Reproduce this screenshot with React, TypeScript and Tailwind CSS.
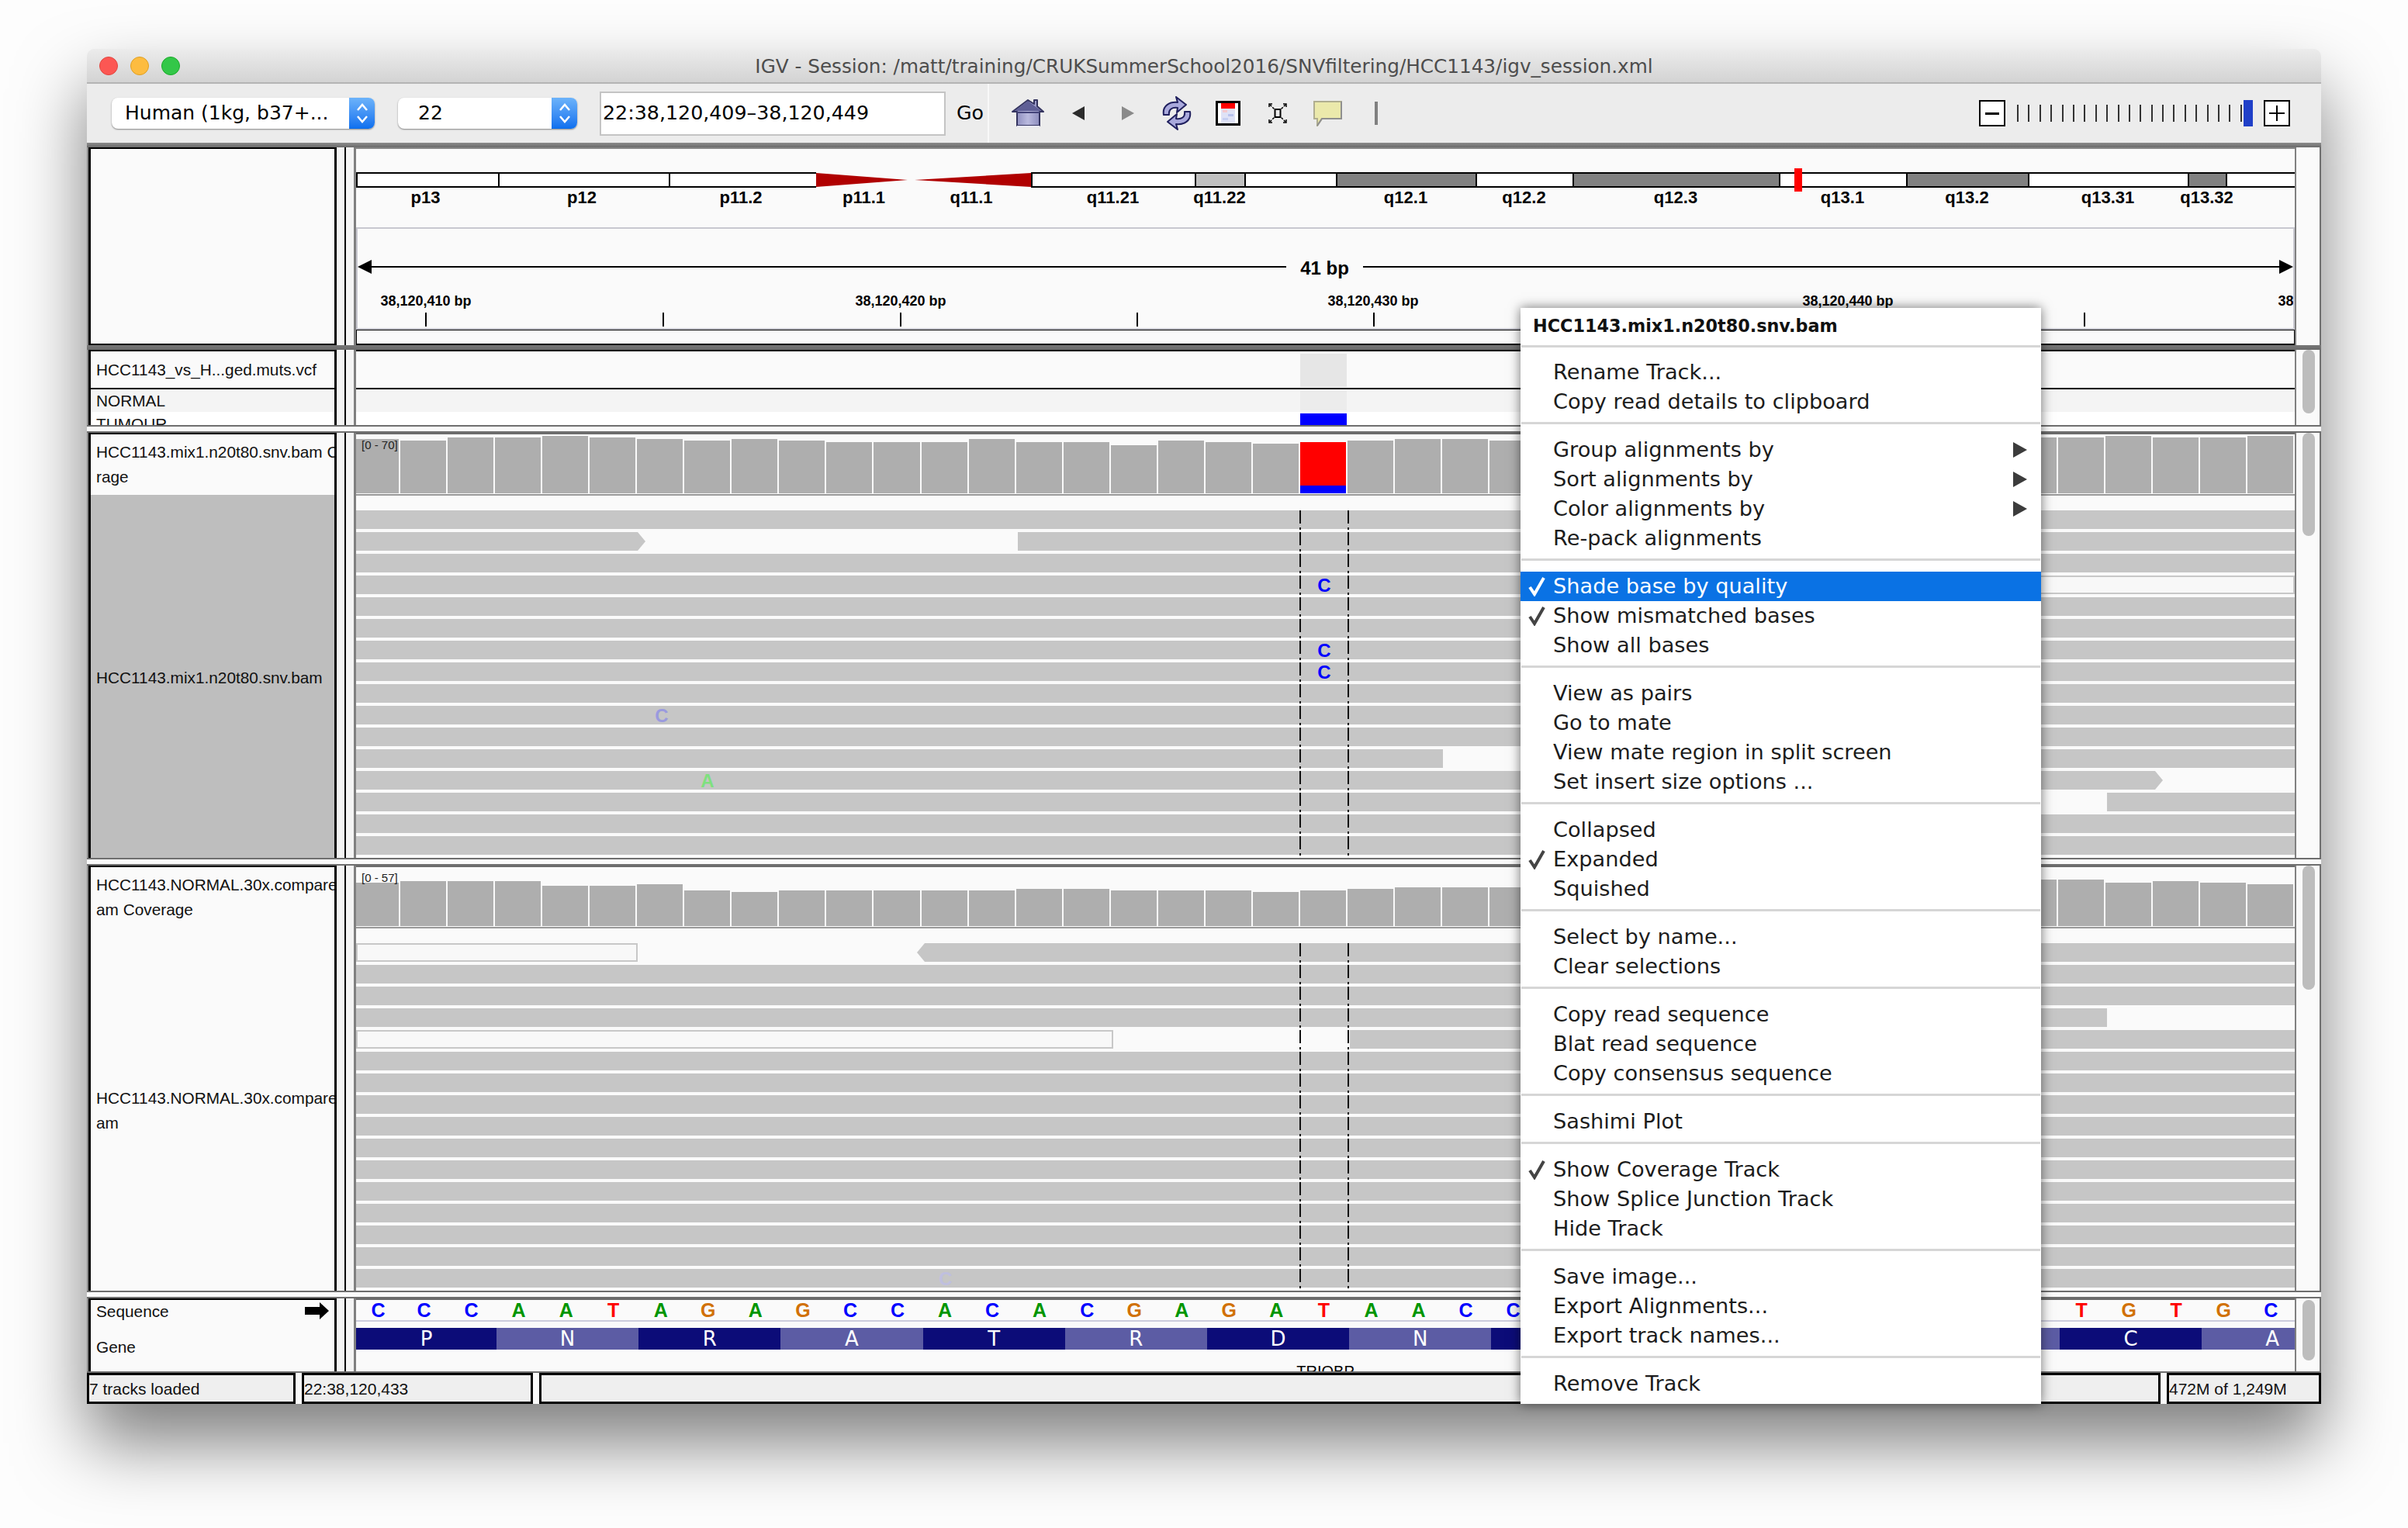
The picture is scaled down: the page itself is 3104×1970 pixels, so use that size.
import React from "react";

const sans = "[font-family:'Liberation_Sans',Arial,sans-serif]";
const lucida = "[font-family:'DejaVu_Sans',sans-serif]";

const bamTops = [566,568,564,564,562,564,566,568,566,568,570,570,570,566,570,570,574,568,570,572,570,568,566,566,568,566,566,564,564,566,564,566,564,564,566,564,564,562,564,564,562];
const normTops = [1138,1136,1136,1136,1142,1142,1140,1148,1150,1148,1148,1148,1148,1148,1146,1146,1148,1148,1148,1150,1148,1146,1144,1144,1144,1142,1140,1138,1136,1138,1138,1136,1136,1138,1136,1134,1134,1138,1136,1138,1140];
const bases = "CCCAATAGAGCCACACGAGATAACC           TGTGC".split("");
const baseColor: Record<string, string> = { A: "text-[#009600]", C: "text-[#0000ff]", G: "text-[#d17105]", T: "text-[#ff0000]" };

type Band = { end: number; label?: string; kind?: "w" | "d" | "l" | "cl" | "cr" };
const bands: Band[] = [
  { end: 642, label: "p13" },
  { end: 862, label: "p12" },
  { end: 1052, label: "p11.2" },
  { end: 1175, label: "p11.1", kind: "cl" },
  { end: 1329, label: "q11.1", kind: "cr" },
  { end: 1540, label: "q11.21" },
  { end: 1604, label: "q11.22", kind: "l" },
  { end: 1722 },
  { end: 1902, label: "q12.1", kind: "d" },
  { end: 2027, label: "q12.2" },
  { end: 2293, label: "q12.3", kind: "d" },
  { end: 2457, label: "q13.1" },
  { end: 2614, label: "q13.2", kind: "d" },
  { end: 2820, label: "q13.31" },
  { end: 2869, label: "q13.32", kind: "d" },
  { end: 2958 },
];

function Cytoband() {
  let start = 459;
  return (
    <div className="relative flex">
      {bands.map((b, i) => {
        const w = b.end - start;
        start = b.end;
        return (
          <div key={i} className="flex shrink-0 flex-col" style={{ width: w }}>
            {b.kind === "cl" ? (
              <svg className="block h-[20px] w-full" viewBox="0 0 123 20" preserveAspectRatio="none">
                <polygon points="0,1 118,10 0,19" fill="#b00000" />
              </svg>
            ) : b.kind === "cr" ? (
              <svg className="block h-[20px] w-full" viewBox="0 0 154 20" preserveAspectRatio="none">
                <polygon points="4,10 154,1 154,19" fill="#b00000" />
              </svg>
            ) : (
              <div
                className={`h-[20px] border-y-2 border-l-2 border-black ${
                  b.kind === "d" ? "bg-[#808080]" : b.kind === "l" ? "bg-[#c0c0c0]" : "bg-white"
                }`}
              />
            )}
            <div className={`flex h-[24px] items-center justify-center whitespace-nowrap text-[22px] font-bold text-black ${sans} ${i < 3 ? "pr-[4px]" : ""}`}>
              {b.label}
            </div>
          </div>
        );
      })}
      <div className="absolute left-[1854px] top-[-5px] h-[30px] w-[10px] bg-[#ff0000]" />
    </div>
  );
}

const tickXs = [548, 854, 1160, 1465, 1770, 2686];
const tickLabels = [
  { x: 549, t: "38,120,410 bp" },
  { x: 1161, t: "38,120,420 bp" },
  { x: 1770, t: "38,120,430 bp" },
  { x: 2382, t: "38,120,440 bp" },
  { x: 2995, t: "38,120,450 bp" },
];

function Ruler() {
  return (
    <div className="relative h-[132px] overflow-hidden border-2 border-[#c8c8d0]">
      <div className="mt-[37px] flex h-[24px] items-center">
        <svg width="18" height="18" viewBox="0 0 18 18" className="shrink-0"><polygon points="0,9 18,0 18,18" fill="#000" /></svg>
        <div className="h-[2px] w-[1179px] bg-black" />
        <div className={`flex w-[99px] justify-center pt-[3px] text-[24px] font-bold leading-none text-black ${sans}`}>41 bp</div>
        <div className="h-[2px] flex-1 bg-black" />
        <svg width="18" height="18" viewBox="0 0 18 18" className="shrink-0"><polygon points="18,9 0,0 0,18" fill="#000" /></svg>
      </div>
      {tickLabels.map((l) => (
        <div
          key={l.x}
          className={`absolute top-[82px] -translate-x-1/2 whitespace-nowrap text-[18px] font-bold leading-[22px] text-black ${sans}`}
          style={{ left: l.x - 461 }}
        >
          {l.t}
        </div>
      ))}
      {tickXs.map((x) => (
        <div key={x} className="absolute top-[108px] h-[18px] w-[2px] bg-black" style={{ left: x - 461 }} />
      ))}
    </div>
  );
}

function Gutter() {
  return (
    <div className="flex w-[25px] shrink-0 bg-[#f4f4f4]">
      <div className="w-[10px]" />
      <div className="w-[2px] bg-black" />
      <div className="w-[10px]" />
      <div className="w-[3px] bg-[#808080]" />
    </div>
  );
}

function ScrollCol({ thumb, top = 0 }: { thumb?: number; top?: number }) {
  return (
    <div className="w-[34px] shrink-0 border-x-2 border-l-[#808080] border-r-[#6f6f6f] bg-[#fafafa] px-[8px]">
      {thumb ? <div className="w-[16px] rounded-[8px] bg-[#bdbdbd]" style={{ height: thumb, marginTop: top }} /> : null}
    </div>
  );
}

function Divider() {
  return <div className="h-[10px] border-y-2 border-[#6e6e6e] bg-[#fafafa]" />;
}

function Coverage({ tops, base, highlight }: { tops: number[]; base: number; highlight?: boolean }) {
  return (
    <div className="flex h-[76px] items-stretch border-b-0">
      {tops.map((t, i) => (
        <div key={i} className={`flex flex-col justify-end pr-[2px] ${i === 0 ? "w-[57px] shrink-0" : "flex-1"}`}>
          {highlight && i === 20 ? (
            <div className="flex flex-col" style={{ height: base - t }}>
              <div className="flex-1 bg-[#ff0000]" />
              <div className="h-[10px] bg-[#0000ff]" />
            </div>
          ) : (
            <div className="bg-[#aeaeae]" style={{ height: base - t }} />
          )}
        </div>
      ))}
    </div>
  );
}

type Seg = [kind: "g" | "w" | "o" | "ar" | "al", end: number];

function ReadRow({ segs }: { segs: Seg[] }) {
  let start = 459;
  return (
    <div className="flex h-[24px]">
      {segs.map(([k, e], i) => {
        const w = e - start;
        start = e;
        if (k === "ar")
          return <div key={i} className="bg-[#c6c6c6] [clip-path:polygon(0_0,100%_50%,0_100%)]" style={{ width: w }} />;
        if (k === "al")
          return <div key={i} className="bg-[#c6c6c6] [clip-path:polygon(100%_0,0_50%,100%_100%)]" style={{ width: w }} />;
        if (k === "o")
          return <div key={i} className="border-2 border-[#c8c8c8] bg-[#f8f8f8]" style={{ width: w }} />;
        return <div key={i} className={k === "g" ? "bg-[#c6c6c6]" : ""} style={{ width: w }} />;
      })}
    </div>
  );
}

const full: Seg[] = [["g", 2958]];
const bamReads: Seg[][] = [
  full,
  [["g", 822], ["ar", 832], ["w", 1312], ["g", 2958]],
  full,
  [["g", 2100], ["o", 2958]],
  full, full, full, full, full, full, full,
  [["g", 1860], ["w", 2300], ["g", 2958]],
  [["g", 2778], ["ar", 2788], ["w", 2958]],
  [["g", 2300], ["w", 2716], ["g", 2958]],
  full, full,
];
const normReads: Seg[][] = [
  [["o", 822], ["w", 1182], ["al", 1192], ["g", 2958]],
  full,
  full,
  [["g", 2716], ["w", 2958]],
  [["o", 1435], ["w", 1740], ["g", 2958]],
  full, full, full, full, full, full, full, full, full, full, full,
];

function Dashes({ h }: { h: number }) {
  const cls =
    "absolute top-0 w-[2px] bg-[repeating-linear-gradient(to_bottom,#111_0,#111_17px,transparent_17px,transparent_22px,#111_22px,#111_25px,transparent_25px,transparent_28px)]";
  return (
    <>
      <div className={`${cls} left-[1216px]`} style={{ height: h }} />
      <div className={`${cls} left-[1278px]`} style={{ height: h }} />
    </>
  );
}

function Mismatch({ x, row, c, cls }: { x: number; row: number; c: string; cls: string }) {
  return (
    <div
      className={`absolute flex h-[26px] w-[22px] -translate-x-1/2 items-center justify-center text-[24px] font-bold ${sans} ${cls}`}
      style={{ left: x - 459, top: row * 28 }}
    >
      {c}
    </div>
  );
}

function Panel({
  tops,
  base,
  reads,
  highlight,
  name,
  nameBg,
  covLabel,
  range,
  thumb,
  letters,
}: {
  tops: number[];
  base: number;
  reads: Seg[][];
  highlight?: boolean;
  name: string[];
  nameBg: string;
  covLabel: string[];
  range: string;
  thumb: number;
  letters: React.ReactNode;
}) {
  return (
    <div className="flex h-[548px]">
      <div className={`flex w-[322px] shrink-0 flex-col border-l-2 border-[#8a8a8a]`}>
        <div className={`flex h-full flex-col overflow-hidden border-x-[3px] border-t-2 border-black bg-[#fafafa] text-[20.8px] leading-[32px] text-[#111] ${sans}`}>
          <div className="h-[78px] shrink-0 whitespace-nowrap pl-[7px] pt-[7px]">
            {covLabel.map((l) => (
              <div key={l}>{l}</div>
            ))}
          </div>
          <div className={`flex flex-1 flex-col justify-center whitespace-nowrap pl-[7px] pt-[3px] ${nameBg}`}>
            {name.map((l) => (
              <div key={l}>{l}</div>
            ))}
          </div>
        </div>
      </div>
      <Gutter />
      <div className="relative w-[2499px] shrink-0 overflow-hidden border-t-2 border-[#6c6c6c] bg-[#fafafa]">
        <Coverage tops={tops} base={base} highlight={highlight} />
        <div className={`mt-[1px] h-[2px] bg-[#999999]`} />
        <div className={`absolute left-[7px] top-[5px] text-[15px] leading-[18px] text-[#222] ${sans}`}>{range}</div>
        <div className="relative mt-[19px] flex flex-col gap-[4px]">
          {reads.map((r, i) => (
            <ReadRow key={i} segs={r} />
          ))}
          <Dashes h={448} />
          {letters}
        </div>
      </div>
      <ScrollCol thumb={thumb} />
    </div>
  );
}

const geneSegs = ["N", "R", "A", "T", "R", "D", "N", "", "", "", "", "C"];

function IconHome() {
  return (
    <svg width="42" height="36" viewBox="0 0 42 36">
      <defs>
        <linearGradient id="hg" x1="0" x2="1" y1="0" y2="0">
          <stop offset="0" stopColor="#7d7db2" />
          <stop offset="0.5" stopColor="#b9b9de" />
          <stop offset="1" stopColor="#7d7db2" />
        </linearGradient>
      </defs>
      <polygon points="21,1 29,6 29,1 33,1 33,9 41,16 36,16 36,34 7,34 7,16 1,16" fill="url(#hg)" stroke="#34345f" strokeWidth="2" strokeLinejoin="round" />
      <polygon points="21,2 38,15 4,15" fill="#5f5f96" />
      <rect x="7" y="16" width="29" height="2" fill="#44447a" />
      <rect x="7" y="34" width="29" height="2" fill="#e8e8f8" />
    </svg>
  );
}

function IconRefresh() {
  return (
    <svg width="42" height="44" viewBox="0 0 42 44">
      <path d="M4 24 C2 12 12 7 22 8 L20 1 L33 11 L21 21 L22 15 C15 14 10 17 11 24 Z" fill="#a9a9dc" stroke="#20205e" strokeWidth="2" strokeLinejoin="round" />
      <path d="M38 20 C40 32 30 37 20 36 L22 43 L9 33 L21 23 L20 29 C27 30 32 27 31 20 Z" fill="#a9a9dc" stroke="#20205e" strokeWidth="2" strokeLinejoin="round" />
    </svg>
  );
}

function IconRegion() {
  return (
    <svg width="32" height="32" viewBox="0 0 32 32">
      <rect x="1.5" y="1.5" width="29" height="29" fill="#fff" stroke="#000" strokeWidth="3" />
      <rect x="7" y="3" width="18" height="7" fill="#ff0000" />
      <rect x="7" y="10" width="18" height="19" fill="#dfe2f6" />
      <rect x="9" y="12" width="6" height="3" fill="#f3c9cf" />
      <rect x="16" y="17" width="7" height="3" fill="#b8c2ee" />
      <rect x="9" y="22" width="7" height="3" fill="#c6cff2" />
    </svg>
  );
}

function IconFit() {
  return (
    <svg width="28" height="28" viewBox="0 0 28 28" fill="none" stroke="#000" strokeWidth="1.5">
      <rect x="10.5" y="9" width="7" height="10" strokeWidth="2" />
      <path d="M4 3 L10 9 M24 3 L18 9 M4 25 L10 19 M24 25 L18 19" strokeDasharray="3 1.5" />
      <path d="M3 6 V2 H7 M25 6 V2 H21 M3 22 V26 H7 M25 22 V26 H21" strokeWidth="1.5" />
    </svg>
  );
}

function IconBubble() {
  return (
    <svg width="38" height="33" viewBox="0 0 38 33">
      <path d="M1 1 H36 V23 H11 L5 32 V23 H1 Z" fill="#ebe9ab" stroke="#b0ae90" strokeWidth="2" />
      <path d="M36 1 V23 H11 L5 32" fill="none" stroke="#8f8f8f" strokeWidth="2" />
    </svg>
  );
}

function Chevs() {
  return (
    <svg width="18" height="30" viewBox="0 0 18 30" fill="none" stroke="#fff" strokeWidth="2.5">
      <path d="M3 11 L9 4 L15 11" />
      <path d="M3 19 L9 26 L15 19" />
    </svg>
  );
}

function Combo({ text, w, pl }: { text: string; w: string; pl: string }) {
  return (
    <div className={`flex h-[40px] shrink-0 overflow-hidden rounded-[8px] bg-white shadow-[0_1px_2px_rgba(0,0,0,0.45)] ${w}`}>
      <div className={`flex flex-1 items-center whitespace-nowrap text-[25px] text-black ${lucida} ${pl}`}>{text}</div>
      <div className="flex w-[33px] items-center justify-center bg-gradient-to-b from-[#6cb3fa] to-[#0a6fee]">
        <Chevs />
      </div>
    </div>
  );
}

type MenuRow = { t: string; check?: boolean; arrow?: boolean; active?: boolean };
const menu: MenuRow[][] = [
  [{ t: "Rename Track..." }, { t: "Copy read details to clipboard" }],
  [{ t: "Group alignments by", arrow: true }, { t: "Sort alignments by", arrow: true }, { t: "Color alignments by", arrow: true }, { t: "Re-pack alignments" }],
  [{ t: "Shade base by quality", check: true, active: true }, { t: "Show mismatched bases", check: true }, { t: "Show all bases" }],
  [{ t: "View as pairs" }, { t: "Go to mate" }, { t: "View mate region in split screen" }, { t: "Set insert size options ..." }],
  [{ t: "Collapsed" }, { t: "Expanded", check: true }, { t: "Squished" }],
  [{ t: "Select by name..." }, { t: "Clear selections" }],
  [{ t: "Copy read sequence" }, { t: "Blat read sequence" }, { t: "Copy consensus sequence" }],
  [{ t: "Sashimi Plot" }],
  [{ t: "Show Coverage Track", check: true }, { t: "Show Splice Junction Track" }, { t: "Hide Track" }],
  [{ t: "Save image..." }, { t: "Export Alignments..." }, { t: "Export track names..." }],
  [{ t: "Remove Track" }],
];

function Menu() {
  return (
    <div className={`absolute bottom-0 left-[1848px] top-[334px] w-[671px] bg-white text-[27.2px] shadow-[0_0_14px_rgba(0,0,0,0.55)] ${lucida}`}>
      <div className="flex h-[48px] items-center pl-[16px] text-[22.3px] font-bold text-[#111]">HCC1143.mix1.n20t80.snv.bam</div>
      <div className="mx-[1px] h-[3px] bg-[#d6d6d6]" />
      {menu.map((sec, i) => (
        <div key={i}>
          <div className={i === 0 ? "pt-[13px]" : "pt-[14px]"}>
            {sec.map((r) => (
              <div
                key={r.t}
                className={`relative flex h-[38px] items-center whitespace-nowrap pl-[42px] ${r.active ? "bg-[#0a72e4] text-white" : "text-[#1c1c1c]"}`}
              >
                {r.check ? (
                  <svg className="absolute left-[9px]" width="26" height="26" viewBox="0 0 26 26" fill="none" stroke={r.active ? "#fff" : "#444"} strokeWidth="4">
                    <path d="M3 14 L9 23 L21 2" />
                  </svg>
                ) : null}
                {r.t}
                {r.arrow ? (
                  <svg className="absolute left-[635px]" width="18" height="20" viewBox="0 0 18 20">
                    <polygon points="0,0 18,10 0,20" fill="#3c3c3c" />
                  </svg>
                ) : null}
              </div>
            ))}
          </div>
          {i < menu.length - 1 ? <div className="mx-[1px] mt-[7px] h-[3px] bg-[#d6d6d6]" /> : null}
        </div>
      ))}
    </div>
  );
}

export default function App() {
  return (
    <div className="h-[1970px] w-[3104px] overflow-hidden bg-[#fdfdfd] pl-[112px] pt-[63px]">
      <div className="relative flex h-[1747px] w-[2880px] flex-col rounded-t-[10px] bg-[#ececec] shadow-[0_50px_90px_rgba(0,0,0,0.5)]">
        {/* Title bar */}
        <div className="relative flex h-[45px] shrink-0 items-center justify-center rounded-t-[10px] border-b-2 border-[#b4b4b4] bg-gradient-to-b from-[#ececec] to-[#d3d3d3] pt-[3px]">
          <div className="absolute left-[16px] top-[10px] flex gap-[16px]">
            <div className="h-[24px] w-[24px] rounded-full border border-[#e2463f] bg-[#fc5753]" />
            <div className="h-[24px] w-[24px] rounded-full border border-[#dfa023] bg-[#fdbc40]" />
            <div className="h-[24px] w-[24px] rounded-full border border-[#1aab29] bg-[#33c748]" />
          </div>
          <div className={`whitespace-nowrap text-[24.7px] text-[#4d4d4d] ${lucida}`}>
            IGV - Session: /matt/training/CRUKSummerSchool2016/SNVfiltering/HCC1143/igv_session.xml
          </div>
        </div>

        {/* Toolbar */}
        <div className="flex h-[76px] shrink-0 items-center bg-[#ececec] pl-[32px]">
          <Combo text="Human (1kg, b37+..." w="w-[339px]" pl="pl-[17px]" />
          <div className="w-[30px]" />
          <Combo text="22" w="w-[231px]" pl="pl-[26px]" />
          <div className="ml-[29px] flex h-[57px] w-[446px] shrink-0 items-center border-2 border-[#c4c4c4] bg-white pl-[2px] text-[25.3px] text-black">
            <span className={lucida}>22:38,120,409–38,120,449</span>
          </div>
          <div className={`ml-[14px] w-[40px] text-[25.3px] text-black ${lucida}`}>Go</div>
          <div className="h-full w-[2px] bg-[#f8f8f8]" />
          <div className="ml-[29px] flex items-center"><IconHome /></div>
          <svg className="ml-[36px]" width="16" height="18" viewBox="0 0 16 18"><polygon points="16,0 0,9 16,18" fill="#2c2c2c" /></svg>
          <svg className="ml-[48px]" width="16" height="18" viewBox="0 0 16 18"><polygon points="0,0 16,9 0,18" fill="#8a8a8a" /></svg>
          <div className="ml-[34px]"><IconRefresh /></div>
          <div className="ml-[29px]"><IconRegion /></div>
          <div className="ml-[34px]"><IconFit /></div>
          <div className="ml-[32px]"><IconBubble /></div>
          <div className="ml-[41px] h-[30px] w-[4px] bg-[#808080]" />
          <div className="flex-1" />
          <div className="flex h-[34px] w-[34px] items-center justify-center border-2 border-black bg-white text-[26px] leading-none">
            <div className="h-[3px] w-[18px] bg-black" />
          </div>
          <div className="ml-[15px] flex h-[22px] w-[290px] justify-between">
            {Array.from({ length: 21 }).map((_, i) => (
              <div key={i} className="h-full w-[2px] bg-[#333]" />
            ))}
          </div>
          <div className="ml-[2px] h-[34px] w-[12px] bg-[#2040c8]" />
          <div className="relative ml-[14px] mr-[40px] flex h-[34px] w-[34px] items-center justify-center border-2 border-black bg-white">
            <div className="h-[2px] w-[20px] bg-black" />
            <div className="absolute h-[20px] w-[2px] bg-black" />
          </div>
        </div>

        {/* Main */}
        <div className="flex min-h-0 flex-1 flex-col">
          <div className="h-[6px] shrink-0 bg-gradient-to-b from-[#8c8c8c] to-[#6c6c6c]" />

          {/* Header row */}
          <div className="flex h-[255px] shrink-0">
            <div className="w-[322px] shrink-0 border-l-2 border-[#8a8a8a]">
              <div className="h-full border-x-[3px] border-y-2 border-black bg-[#fafafa]" />
            </div>
            <Gutter />
            <div className="w-[2499px] shrink-0 bg-[#fafafa]">
              <div className="h-[103px] border-t-2 border-[#888888] pt-[30px]">
                <Cytoband />
              </div>
              <Ruler />
              <div className="h-[20px] border border-b-2 border-black bg-[#fafafa]" />
            </div>
            <ScrollCol />
          </div>

          <div className="h-[6px] shrink-0 bg-gradient-to-b from-[#777777] to-[#6a6a6a]" />

          {/* VCF */}
          <div className="flex h-[97px] shrink-0">
            <div className="w-[322px] shrink-0 border-l-2 border-[#8a8a8a]">
              <div className={`flex h-full flex-col overflow-hidden border-x-[3px] border-t-2 border-black text-[20.8px] text-[#111] ${sans}`}>
                <div className="flex h-[47px] shrink-0 items-center bg-[#fafafa] pl-[7px]">HCC1143_vs_H...ged.muts.vcf</div>
                <div className="h-[2px] shrink-0 bg-black" />
                <div className="flex h-[29px] shrink-0 items-center bg-[#f4f4f4] pl-[7px]">NORMAL</div>
                <div className="h-[30px] bg-white pl-[7px] pt-[4px] leading-[24px]">TUMOUR</div>
              </div>
            </div>
            <Gutter />
            <div className="flex w-[2499px] shrink-0 flex-col overflow-hidden border-t-2 border-black">
              <div className="h-[47px] shrink-0 bg-[#fafafa] pl-[1217px] pt-[3px]">
                <div className="h-[43px] w-[60px] bg-[#e6e6e6]" />
              </div>
              <div className="h-[2px] shrink-0 bg-black" />
              <div className="h-[29px] shrink-0 bg-[#f4f4f4] pl-[1217px] pt-[1px]">
                <div className="h-[26px] w-[60px] bg-[#ececec]" />
              </div>
              <div className="flex-1 bg-white pl-[1217px] pt-[2px]">
                <div className="h-[16px] w-[60px] bg-[#0000ff]" />
              </div>
            </div>
            <ScrollCol thumb={82} />
          </div>

          <Divider />

          {/* BAM */}
          <Panel
            tops={bamTops}
            base={636}
            reads={bamReads}
            highlight
            name={["HCC1143.mix1.n20t80.snv.bam"]}
            nameBg="bg-[#bebebe]"
            covLabel={["HCC1143.mix1.n20t80.snv.bam C", "rage"]}
            range="[0 - 70]"
            thumb={133}
            letters={
              <>
                <Mismatch x={1707} row={3} c="C" cls="text-[#0000ff]" />
                <Mismatch x={1707} row={6} c="C" cls="text-[#0000ff]" />
                <Mismatch x={1707} row={7} c="C" cls="text-[#0000ff]" />
                <Mismatch x={853} row={9} c="C" cls="text-[#9a9ade]" />
                <Mismatch x={912} row={12} c="A" cls="text-[#7fe07f]" />
              </>
            }
          />

          <Divider />

          {/* NORMAL */}
          <Panel
            tops={normTops}
            base={1194}
            reads={normReads}
            name={["HCC1143.NORMAL.30x.compare", "am"]}
            nameBg="bg-[#fafafa]"
            covLabel={["HCC1143.NORMAL.30x.compare", "am Coverage"]}
            range="[0 - 57]"
            thumb={160}
            letters={<Mismatch x={1219} row={15} c="C" cls="text-[#bfbfdf]" />}
          />

          <Divider />

          {/* Sequence + gene */}
          <div className="flex h-[94px] shrink-0">
            <div className="w-[322px] shrink-0 border-l-2 border-[#8a8a8a]">
              <div className={`relative h-full border-x-[3px] border-t-2 border-black bg-[#fafafa] pl-[7px] text-[20.8px] text-[#111] ${sans}`}>
                <div className="flex h-[30px] items-center">Sequence</div>
                <div className="mt-[16px] flex h-[30px] items-center">Gene</div>
                <svg className="absolute left-[276px] top-[3px]" width="32" height="22" viewBox="0 0 32 22">
                  <polygon points="0,6 19,6 19,0 31,11 19,22 19,16 0,16" fill="#000" />
                </svg>
              </div>
            </div>
            <Gutter />
            <div className="w-[2499px] shrink-0 overflow-hidden border-t-2 border-[#6c6c6c] bg-[#fafafa]">
              <div className="flex h-[26px] items-center border-b-0">
                {bases.map((b, i) => (
                  <div key={i} className={`flex justify-center text-[25px] font-bold leading-none ${sans} ${baseColor[b] ?? ""} ${i === 0 ? "w-[57px] shrink-0" : "flex-1"}`}>
                    {b}
                  </div>
                ))}
              </div>
              <div className="h-[2px] bg-[#ccccdc]" />
              <div className={`mt-[8px] flex h-[28px] text-[26px] leading-[28px] text-white ${lucida}`}>
                <div className="flex w-[181px] shrink-0 justify-center bg-[#0c0c78]">P</div>
                {geneSegs.map((g, i) => (
                  <div key={i} className={`flex flex-1 justify-center ${i % 2 === 0 ? "bg-[#5c5ca4]" : "bg-[#0c0c78]"}`}>
                    {g}
                  </div>
                ))}
                <div className="flex w-[120px] shrink-0 justify-end bg-[#5c5ca4] pr-[20px]">A</div>
              </div>
              <div className={`mt-[19px] flex h-[9px] justify-center overflow-hidden text-[20px] leading-[24px] text-black ${sans}`}>
                <span className="-mt-[3px]">TRIOBP</span>
              </div>
            </div>
            <ScrollCol thumb={78} top={2} />
          </div>

          <div className="h-[2px] shrink-0 bg-[#6e6e6e]" />

          {/* Status bar */}
          <div className={`flex h-[40px] shrink-0 gap-[8px] bg-[#fafafa] text-[21px] text-[#111] ${sans}`}>
            <div className="flex w-[269px] items-center border-[3px] border-black bg-[#efefef] pt-[1px]">7 tracks loaded</div>
            <div className="flex w-[298px] items-center border-[3px] border-black bg-[#efefef] pt-[1px]">22:38,120,433</div>
            <div className="w-[2090px] border-[3px] border-black bg-[#efefef]" />
            <div className="flex flex-1 items-center border-[3px] border-black bg-[#efefef] pt-[1px]">472M of 1,249M</div>
          </div>
        </div>

        <Menu />
      </div>
    </div>
  );
}
